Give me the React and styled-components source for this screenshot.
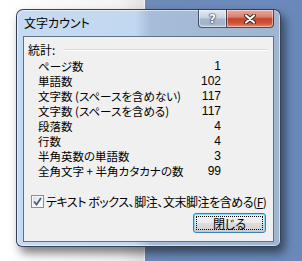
import React from "react";
import styled, { createGlobalStyle } from "styled-components";

const GlobalStyle = createGlobalStyle`
  html, body {
    margin: 0;
    padding: 0;
  }
  body {
    width: 302px;
    height: 261px;
    overflow: hidden;
    font-family: "Noto Sans CJK JP", sans-serif;
    color: #000;
  }
`;

const Desktop = styled.div`
  width: 302px;
  height: 261px;
  box-sizing: border-box;
  padding: 9px 0 0 16px;
  background:
    linear-gradient(90deg, #ffffff 0, #f3f3f3 120px, #e2e2e2 143px, rgba(0, 0, 0, 0) 145px),
    linear-gradient(90deg, #f6f6f6 0, #f6f6f6 145px, #6d8ab8 145px, #6a89bb 100%);
`;

const Window = styled.div`
  width: 265px;
  height: 238px;
  box-sizing: border-box;
  display: flex;
  flex-direction: column;
  border: 1px solid rgba(30, 40, 56, 0.85);
  border-radius: 7px 7px 6px 6px;
  background: linear-gradient(90deg, #c6dbf3 0, #c2d7f0 118px, #a7bcd8 134px, #a0b5d2 100%);
  box-shadow: inset 0 0 0 1px rgba(255, 255, 255, 0.55), 4px 6px 10px rgba(0, 0, 0, 0.5);
`;

const TitleBar = styled.div`
  height: 26px;
  display: flex;
  align-items: flex-start;
  padding-left: 7px;
`;

const Title = styled.div`
  flex: 1;
  margin-top: 5px;
  font-size: 12px;
  line-height: 15px;
  font-feature-settings: "palt";
`;

const CaptionGroup = styled.div`
  display: flex;
  height: 18px;
  margin-right: 6px;
`;

const CaptionButton = styled.div`
  box-sizing: border-box;
  width: ${(p) => p.width}px;
  height: 18px;
  display: flex;
  align-items: center;
  justify-content: center;
  border: 1px solid rgba(40, 50, 70, 0.8);
  border-top: none;
  border-right: ${(p) => (p.close ? "1px solid rgba(40, 50, 70, 0.8)" : "none")};
  border-radius: ${(p) => (p.close ? "0 0 4px 0" : "0 0 0 4px")};
  background: ${(p) =>
    p.close
      ? "linear-gradient(#e9a99a 0, #d9826f 40%, #c7432a 52%, #cc5236 75%, #e0866b 100%)"
      : "linear-gradient(#e3eaf3 0, #c9d4e2 45%, #a9b8cc 52%, #a3b4ca 80%, #b9c8da 100%)"};
  box-shadow: inset 0 0 0 1px rgba(255, 255, 255, 0.45);
`;

const HelpGlyph = styled.span`
  font-family: "DejaVu Sans", sans-serif;
  font-weight: bold;
  font-size: 12px;
  line-height: 12px;
  color: #fff;
  text-shadow: 0 0 1px #2b3648, 0 0 1px #2b3648, 0 0 2px #2b3648;
`;

const Client = styled.div`
  flex: 1;
  margin: 0 6px 4px 6px;
  border: 1px solid #5f7184;
  background: #f0f0f0;
  display: flex;
  flex-direction: column;
  padding: 5px 0 0 4px;
  font-size: 12px;
  line-height: 15px;
  font-feature-settings: "palt";
`;

const Heading = styled.div`
  display: flex;
  align-items: center;
  height: 15px;
  padding-right: 5px;
`;

const Rule = styled.div`
  flex: 1;
  margin-left: 8px;
  margin-top: 1px;
  border-top: 1px solid #d3dae0;
  border-bottom: 1px solid #ffffff;
`;

const StatsGrid = styled.div`
  display: grid;
  grid-template-columns: 150px 33px;
  grid-auto-rows: 15px;
  margin: 2px 0 0 10px;
`;

const Label = styled.div`
  white-space: nowrap;
  font-size: 11.5px;
  line-height: 15px;
`;

const Value = styled.div`
  text-align: right;
  font-family: "Liberation Sans Narrow", "Liberation Sans", sans-serif;
  font-size: 12px;
  line-height: 15px;
`;

const CheckRow = styled.label`
  display: flex;
  align-items: center;
  height: 15px;
  margin-top: 15px;
  padding-left: 3px;
  white-space: nowrap;
`;

const CheckText = styled.span`
  letter-spacing: -0.45px;
`;

const CheckBox = styled.span`
  box-sizing: border-box;
  width: 13px;
  height: 13px;
  margin-right: 2px;
  display: flex;
  align-items: center;
  justify-content: center;
  border: 1px solid #8e8f8f;
  background: linear-gradient(135deg, #dcdcdc 0, #f4f4f4 60%, #ffffff 100%);
  box-shadow: inset 0 0 0 1px #f4f4f4;
`;

const ButtonRow = styled.div`
  display: flex;
  justify-content: flex-end;
  margin-top: 4px;
  padding-right: 7px;
`;

const Button = styled.div`
  position: relative;
  box-sizing: border-box;
  width: 73px;
  height: 20px;
  display: flex;
  align-items: center;
  justify-content: center;
  border: 1px solid #3c7fb1;
  border-radius: 3px;
  background: linear-gradient(#f2f2f2 0, #ebebeb 50%, #dddddd 50%, #cfcfcf 100%);
  box-shadow: inset 0 0 0 1px #8fd8f8;

  &::after {
    content: "";
    position: absolute;
    inset: 2px;
    border: 1px dotted #000;
  }
`;

const stats = [
  ["ページ数", "1"],
  ["単語数", "102"],
  ["文字数 (スペースを含めない)", "117"],
  ["文字数 (スペースを含める)", "117"],
  ["段落数", "4"],
  ["行数", "4"],
  ["半角英数の単語数", "3"],
  ["全角文字 + 半角カタカナの数", "99"]
];

const CloseGlyph = () => (
  <svg width="12" height="10" viewBox="0 0 12 10">
    <path d="M2 1.5 L10 8.5 M10 1.5 L2 8.5" stroke="#3a2420" strokeWidth="4" strokeLinecap="round" />
    <path d="M2 1.5 L10 8.5 M10 1.5 L2 8.5" stroke="#ffffff" strokeWidth="2.2" strokeLinecap="round" />
  </svg>
);

const CheckMark = () => (
  <svg width="9" height="9" viewBox="0 0 9 9">
    <path d="M1 4.5 L3.5 7.5 L8 1" fill="none" stroke="#4a5e8c" strokeWidth="1.8" />
  </svg>
);

const App = () => {
  return (
    <Desktop>
      <GlobalStyle />
      <Window>
        <TitleBar>
          <Title>文字カウント</Title>
          <CaptionGroup>
            <CaptionButton width={28}>
              <HelpGlyph>?</HelpGlyph>
            </CaptionButton>
            <CaptionButton width={48} close>
              <CloseGlyph />
            </CaptionButton>
          </CaptionGroup>
        </TitleBar>
        <Client>
          <Heading>
            <span>統計:</span>
            <Rule />
          </Heading>
          <StatsGrid>
            {stats.map(([label, value]) => (
              <React.Fragment key={label}>
                <Label>{label}</Label>
                <Value>{value}</Value>
              </React.Fragment>
            ))}
          </StatsGrid>
          <CheckRow>
            <CheckBox>
              <CheckMark />
            </CheckBox>
            <CheckText>
              テキスト ボックス、脚注、文末脚注を含める(<u>F</u>)
            </CheckText>
          </CheckRow>
          <ButtonRow>
            <Button>閉じる</Button>
          </ButtonRow>
        </Client>
      </Window>
    </Desktop>
  );
};

export default App;
